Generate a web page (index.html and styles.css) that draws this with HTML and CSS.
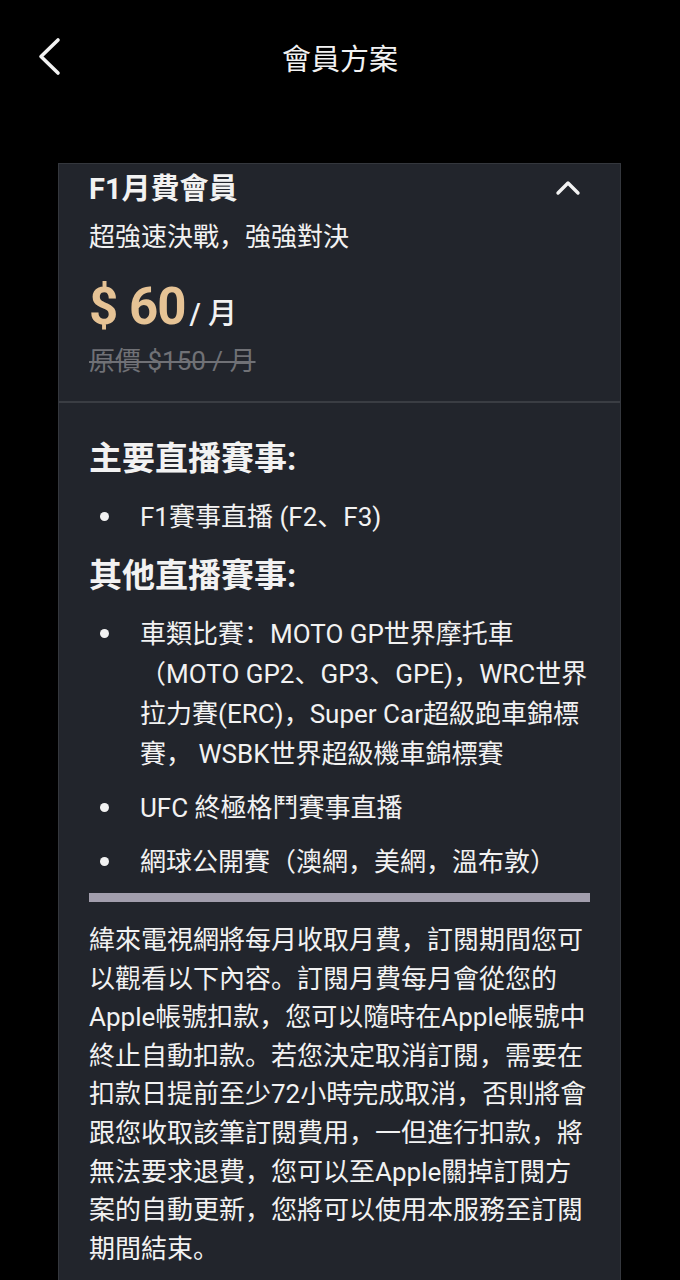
FILE: index.html
```html
<!doctype html>
<html lang="zh">
<head>
	<meta charset="UTF-8">
	<title>會員方案</title>
	<link rel="stylesheet" href="styles.css">
</head>
<body>
	<header class="topbar">
		<span class="back">
			<svg width="26" height="40" viewBox="0 0 26 40"><polyline points="21,3 4,19.5 21,36" fill="none" stroke="#f2f2f2" stroke-width="3.6" stroke-linecap="round" stroke-linejoin="round"/></svg>
		</span>
		<h1 class="topbar-title">會員方案</h1>
		<span></span>
	</header>

	<div class="plan">
		<div class="plan-head">
			<div class="plan-title-row">
				<h2 class="plan-title">F1月費會員</h2>
				<svg class="fold" width="26" height="18" viewBox="0 0 26 18"><polyline points="3,15 13,5 23,15" fill="none" stroke="#f2f2f2" stroke-width="3.4" stroke-linecap="round" stroke-linejoin="round"/></svg>
			</div>
			<p class="plan-sub">超強速決戰，強強對決</p>
			<p class="plan-price"><span class="price-num">$ 60</span> <span class="price-unit">/ 月</span></p>
			<p class="plan-old">原價 $150 / 月</p>
		</div>

		<div class="plan-body">
			<h3 class="sec-title">主要直播賽事:</h3>
			<ul class="events">
				<li>F1賽事直播 (F2、F3)</li>
			</ul>
			<h3 class="sec-title">其他直播賽事:</h3>
			<ul class="events">
				<li>車類比賽：MOTO GP世界摩托車（MOTO GP2、GP3、GPE)，WRC世界拉力賽(ERC)，Super Car超級跑車錦標賽， WSBK世界超級機車錦標賽</li>
				<li>UFC 終極格鬥賽事直播</li>
				<li>網球公開賽（澳網，美網，溫布敦）</li>
			</ul>
			<div class="bar"></div>
			<p class="notice">緯來電視網將每月收取月費，訂閱期間您可以觀看以下內容。訂閱月費每月會從您的Apple帳號扣款，您可以隨時在Apple帳號中終止自動扣款。若您決定取消訂閱，需要在扣款日提前至少72小時完成取消，否則將會跟您收取該筆訂閱費用，一但進行扣款，將無法要求退費，您可以至Apple關掉訂閱方案的自動更新，您將可以使用本服務至訂閱期間結束。</p>
		</div>
	</div>
</body>
</html>
```

FILE: styles.css
```css
*{
	margin: 0;
	padding: 0;
	box-sizing: border-box;
}
body{
	background: #000;
	color: #f2f2f2;
	font-family: Roboto, "Noto Sans CJK SC", sans-serif;
	overflow: hidden;
}
.topbar{
	height: 114px;
	display: grid;
	grid-template-columns: 1fr auto 1fr;
	align-items: center;
}
.back{
	padding-left: 37px;
	display: flex;
}
.topbar-title{
	font-size: 29px;
	font-weight: 400;
}
.plan{
	margin: 49px 59px 0 58px;
	background: #22252c;
	border: 1px solid #34373d;
	border-bottom: none;
	min-height: 1200px;
}
.plan-head{
	padding: 5px 31px 22px 30px;
	border-bottom: 2px solid #3a3d43;
}
.plan-title-row{
	display: flex;
	justify-content: space-between;
	align-items: center;
	height: 40px;
}
.plan-title{
	font-size: 29px;
	font-weight: 700;
	line-height: 40px;
}
.fold{
	margin-right: 8px;
	margin-top: -4px;
}
.plan-sub{
	font-size: 26px;
	line-height: 36px;
	margin-top: 10px;
}
.plan-price{
	margin-top: 22px;
	line-height: 60px;
	height: 60px;
}
.price-num{
	font-size: 51px;
	font-weight: 700;
	color: #e6c395;
	letter-spacing: -1px;
}
.price-unit{
	font-size: 29px;
	font-weight: 500;
}
.plan-old{
	margin-top: 6px;
	font-size: 26px;
	line-height: 36px;
	color: #707176;
	text-decoration: line-through;
}
.plan-body{
	padding: 34px 30px 0 30px;
}
.sec-title{
	font-size: 33px;
	font-weight: 700;
	line-height: 44px;
}
.sec-title + .events{
	margin-top: 16px;
}
.events + .sec-title{
	margin-top: 17px;
}
.events{
	list-style: none;
	display: flex;
	flex-direction: column;
	gap: 14px;
}
.events > li{
	display: flex;
	font-size: 26px;
	line-height: 40px;
}
.events > li::before{
	content: "";
	flex: none;
	width: 9px;
	height: 9px;
	border-radius: 50%;
	background: #f2f2f2;
	margin: 15px 31px 0 11px;
}
.bar{
	height: 9px;
	background: #a29ead;
	margin-top: 11px;
}
.notice{
	margin-top: 19px;
	font-size: 26px;
	line-height: 38.6px;
}
```
